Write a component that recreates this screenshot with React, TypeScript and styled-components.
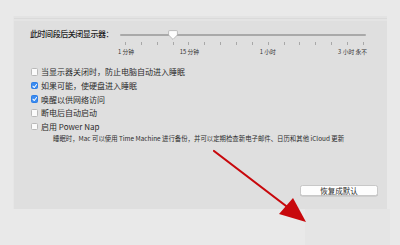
import React from "react";
import styled, { createGlobalStyle } from "styled-components";

const Global = createGlobalStyle`
  html, body { margin: 0; padding: 0; }
  body {
    background: #e9e9e9;
    font-family: "Noto Sans CJK SC", "Noto Sans", sans-serif;
    color: #2a2a2a;
  }
`;

const Page = styled.div`
  position: relative;
  width: 400px;
  height: 245px;
  overflow: hidden;
  background: #e9e9e9;
  padding: 16px 0 0 13px;
  box-sizing: border-box;
  display: flex;
  flex-direction: column;
`;

const Panel = styled.div`
  width: 374px;
  height: 193px;
  box-sizing: border-box;
  padding: 14px 9px 13px 17px;
  background: linear-gradient(#e3e3e3 0 2px, #dadada 2px 3px, #e4e4e4 3px 5px, #dfdfdf 5px);
  box-shadow: inset 1px 0 0 #e6e6e6;
  display: flex;
  flex-direction: column;
`;

const SliderRow = styled.div`
  display: grid;
  grid-template-columns: 90px 246px;
`;

const SliderLabel = styled.div`
  font-size: 8px;
  line-height: 10px;
  height: 10px;
  margin-top: -1px;
  font-weight: 500;
  color: #222;
  white-space: nowrap;
  letter-spacing: -0.45px;
`;

const SliderBox = styled.div`
  display: flex;
  flex-direction: column;
`;

const TrackWrap = styled.div`
  position: relative;
  height: 10px;
`;

const Track = styled.div`
  position: absolute;
  left: 0;
  right: 0;
  top: 4px;
  height: 2px;
  border-radius: 1px;
  background: #a9a9a9;
`;

const Knob = styled.svg`
  position: absolute;
  top: 0;
`;

const Ticks = styled.div`
  display: flex;
  justify-content: space-between;
  padding: 0 2px 0 5px;
  margin-top: 2px;
  height: 3px;
`;

const Tick = styled.span`
  width: 1px;
  height: 3px;
  background: #a8a8a8;
`;

const TickLabels = styled.div`
  position: relative;
  height: 7px;
  margin-top: 3px;
`;

const TickLabel = styled.span<{ $align?: "center" | "right" }>`
  position: absolute;
  top: 0;
  font-size: 5.8px;
  line-height: 7px;
  color: #333;
  white-space: nowrap;
  transform: ${(p) => (p.$align === "right" ? "translateX(-100%)" : "translateX(-50%)")};
`;

const Options = styled.div`
  display: flex;
  flex-direction: column;
  margin-top: 10px;
`;

const OptionRow = styled.label`
  display: flex;
  align-items: center;
  gap: 3px;
  height: 13.7px;
  font-size: 8px;
  color: #2a2a2a;
  white-space: nowrap;
`;

const Box = styled.span<{ $checked?: boolean }>`
  width: 7.5px;
  height: 7.5px;
  box-sizing: border-box;
  margin-left: 0.5px;
  border-radius: 1.5px;
  border: 0.8px solid ${(p) => (p.$checked ? "#2f7fe6" : "#b9b9b9")};
  background: ${(p) => (p.$checked ? "#3a8bf0" : "#fbfbfb")};
  display: flex;
  align-items: center;
  justify-content: center;
`;

const Desc = styled.div`
  margin: 1px 0 0 23px;
  font-size: 6.4px;
  line-height: 9px;
  color: #2e2e2e;
  white-space: nowrap;
`;

const ButtonRow = styled.div`
  margin-top: auto;
  display: flex;
  justify-content: flex-end;
`;

const Button = styled.button`
  width: 78px;
  height: 11px;
  padding: 0;
  border: 0.8px solid #c8c8c8;
  border-radius: 2.5px;
  background: #fdfdfd;
  box-shadow: 0 0.5px 0 #bdbdbd;
  font-family: inherit;
  font-size: 7.5px;
  line-height: 9px;
  color: #2a2a2a;
`;

const Footer = styled.div`
  display: flex;
  flex: 1;
  padding-left: 292px;
`;

const Shade = styled.div`
  width: 85px;
  background: #e5e5e5;
`;

const Arrow = styled.svg`
  position: absolute;
  left: 0;
  top: 0;
  pointer-events: none;
`;

const ticks = Array.from({ length: 16 });
const tickX = (i: number) => 5 + i * 15.87;

const options = [
  { text: "当显示器关闭时，防止电脑自动进入睡眠", checked: false },
  { text: "如果可能，使硬盘进入睡眠", checked: true },
  { text: "唤醒以供网络访问", checked: true },
  { text: "断电后自动启动", checked: false },
  { text: "启用 Power Nap", checked: false },
];

export default function App() {
  return (
    <>
      <Global />
      <Page>
        <Panel>
          <SliderRow>
            <SliderLabel>此时间段后关闭显示器：</SliderLabel>
            <SliderBox>
              <TrackWrap>
                <Track />
                <Knob width="10" height="10" viewBox="0 0 10 10" style={{ left: tickX(3) - 5 }}>
                  <path d="M1.5 0.6 H8.5 Q9.4 0.6 9.4 1.5 V5 L5 9.4 L0.6 5 V1.5 Q0.6 0.6 1.5 0.6 Z" fill="#fdfdfd" stroke="#a6a6a6" strokeWidth="0.7" />
                </Knob>
              </TrackWrap>
              <Ticks>
                {ticks.map((_, i) => (
                  <Tick key={i} />
                ))}
              </Ticks>
              <TickLabels>
                <TickLabel style={{ left: tickX(0) + 1 }}>1 分钟</TickLabel>
                <TickLabel style={{ left: tickX(4) + 1 }}>15 分钟</TickLabel>
                <TickLabel style={{ left: tickX(9) }}>1 小时</TickLabel>
                <TickLabel style={{ left: tickX(14) - 1 }}>3 小时</TickLabel>
                <TickLabel $align="right" style={{ left: 247 }}>永不</TickLabel>
              </TickLabels>
            </SliderBox>
          </SliderRow>
          <Options>
            {options.map((o) => (
              <OptionRow key={o.text}>
                <Box $checked={o.checked}>
                  {o.checked && (
                    <svg width="6" height="6" viewBox="0 0 6 6">
                      <path d="M1 3.2 L2.5 4.7 L5 1.3" fill="none" stroke="#fff" strokeWidth="1.1" strokeLinecap="round" strokeLinejoin="round" />
                    </svg>
                  )}
                </Box>
                {o.text}
              </OptionRow>
            ))}
          </Options>
          <Desc>睡眠时，Mac 可以使用 Time Machine 进行备份，并可以定期检查新电子邮件、日历和其他 iCloud 更新</Desc>
          <ButtonRow>
            <Button>恢复成默认</Button>
          </ButtonRow>
        </Panel>
        <Footer>
          <Shade />
        </Footer>
        <Arrow width="400" height="245" viewBox="0 0 400 245">
          <line x1="214" y1="151" x2="290" y2="209" stroke="#c8080c" strokeWidth="2.2" strokeLinecap="round" />
          <polygon points="306,222 279,214 293,198" fill="#c8080c" />
        </Arrow>
      </Page>
    </>
  );
}
